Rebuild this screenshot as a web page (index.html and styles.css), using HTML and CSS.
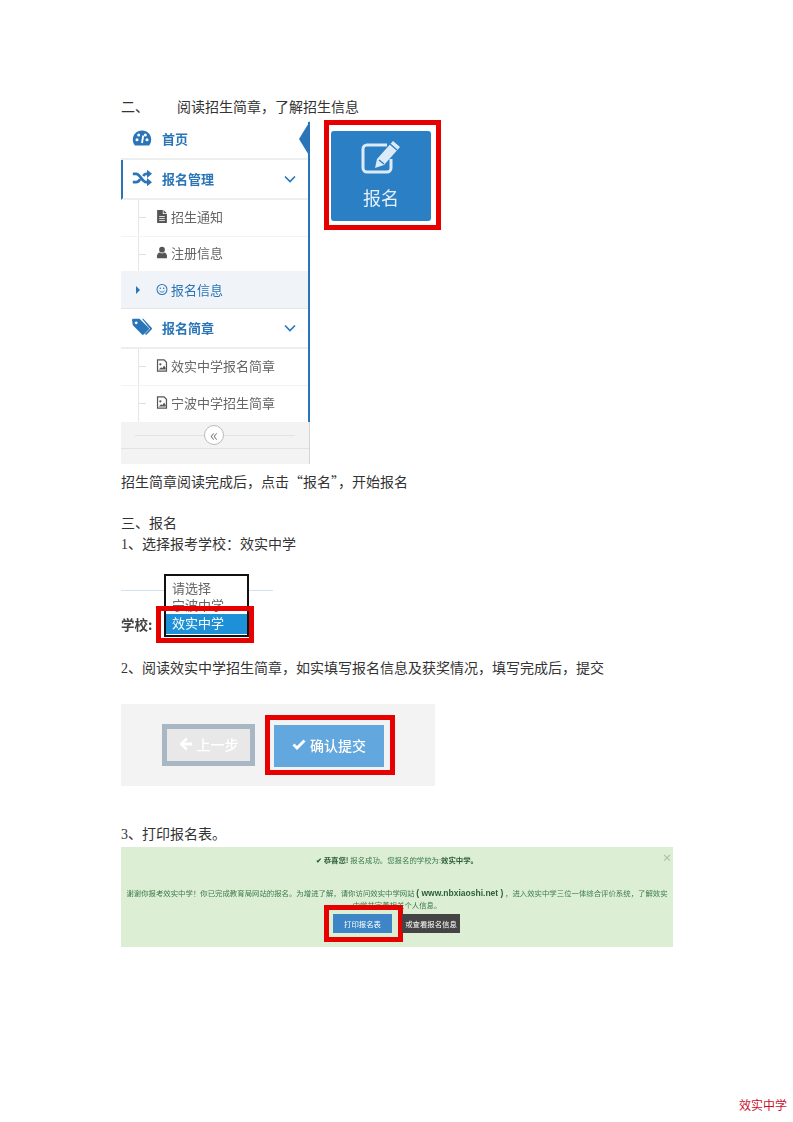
FILE: index.html
```html
<!DOCTYPE html>
<html lang="zh-CN">
<head>
    <meta charset="UTF-8">
    <title>报名流程</title>
    <link rel="stylesheet" href="styles.css">
</head>
<body>
    <div class="page">
        <p class="line line-first"><span class="step-no">二、</span>阅读招生简章，了解招生信息</p>

        <div class="signup-row">
            <div class="sidebar">
                <div class="nav-top nav-home">
                    <svg class="nav-icon" viewBox="0 0 24 24"><path fill="#2a75b8" d="M12 3C5.600 3 1 8 1 14c0 2.700 1 5 2.500 7h17C22 19 23 16.700 23 14 23 8 18.400 3 12 3z"/><circle cx="6" cy="14" r="1.800" fill="#fff"/><circle cx="8" cy="8.500" r="1.800" fill="#fff"/><circle cx="16" cy="8.500" r="1.800" fill="#fff"/><circle cx="18" cy="14" r="1.800" fill="#fff"/><path stroke="#fff" stroke-width="2.200" d="M12 18l1.500-9"/></svg>
                    <span>首页</span>
                    <span class="nav-arrow"></span>
                </div>
                <div class="nav-top nav-open">
                    <svg class="nav-icon" viewBox="0 0 24 24"><path fill="none" stroke="#2a75b8" stroke-width="3.400" d="M1 7h4c5 0 7 10 12 10h2M1 17h4c2 0 3.500-1.500 4.800-3.500M13.500 9.500C14.500 8 15.500 7 17 7h2"/><path fill="#2a75b8" d="M18 2l6 5-6 5zM18 12l6 5-6 5z"/></svg>
                    <span>报名管理</span>
                    <svg class="nav-chevron" viewBox="0 0 12 8"><path d="M1 1.500l5 5 5-5" fill="none" stroke="#2a75b8" stroke-width="1.600"/></svg>
                </div>
                <div class="sub-list">
                    <div class="sub-item sub-notice">
                        <svg class="sub-icon" viewBox="0 0 14 16"><path fill="#555" d="M1 0h7v5h5v11H1zM9 0l4 4H9z"/><path stroke="#fff" d="M3.500 8h7M3.500 10.500h7M3.500 13h7"/></svg>
                        <span>招生通知</span>
                    </div>
                    <div class="sub-item sub-reg">
                        <svg class="sub-icon" viewBox="0 0 14 16"><circle cx="7" cy="4.500" r="3.500" fill="#555"/><path fill="#555" d="M1 15c-1-5 2-7 3-7 1.800 1.400 4.200 1.400 6 0 1 0 4 2 3 7z"/></svg>
                        <span>注册信息</span>
                    </div>
                    <div class="sub-item sub-current">
                        <span class="sub-caret"></span>
                        <svg class="sub-icon" viewBox="0 0 14 14"><circle cx="7" cy="7" r="5.800" fill="none" stroke="#2a75b8" stroke-width="1.200"/><circle cx="5" cy="5.500" r="0.900" fill="#2a75b8"/><circle cx="9" cy="5.500" r="0.900" fill="#2a75b8"/><path d="M4 8.500c1.500 2 4.500 2 6 0" fill="none" stroke="#2a75b8"/></svg>
                        <span>报名信息</span>
                    </div>
                </div>
                <div class="nav-top nav-brochure">
                    <svg class="nav-icon nav-icon-tags" viewBox="0 0 24 20"><path fill="#2a75b8" d="M0 1.500C0 .700.700 0 1.500 0H9l11 11c.6.600.6 1.500 0 2l-6 6c-.6.600-1.500.6-2 0L1 8z"/><circle cx="5" cy="5" r="1.700" fill="#fff"/><path fill="#2a75b8" d="M12 0h1.500l10 11c.6.600.6 1.500 0 2l-6.500 6.500-1.500-1 6-6.500z"/></svg>
                    <span>报名简章</span>
                    <svg class="nav-chevron" viewBox="0 0 12 8"><path d="M1 1.500l5 5 5-5" fill="none" stroke="#2a75b8" stroke-width="1.600"/></svg>
                </div>
                <div class="sub-list">
                    <div class="sub-item sub-doc">
                        <svg class="sub-icon" viewBox="0 0 14 16"><path fill="none" stroke="#555" stroke-width="1.500" d="M1.500 1h8l3 3v11h-11z"/><circle cx="5" cy="6.500" r="1.400" fill="#555"/><path fill="#555" d="M3 13l3-3 1.500 1.500L9.500 8l2 3v2z"/></svg>
                        <span>效实中学报名简章</span>
                    </div>
                    <div class="sub-item sub-doc2">
                        <svg class="sub-icon" viewBox="0 0 14 16"><path fill="none" stroke="#555" stroke-width="1.500" d="M1.500 1h8l3 3v11h-11z"/><circle cx="5" cy="6.500" r="1.400" fill="#555"/><path fill="#555" d="M3 13l3-3 1.500 1.500L9.500 8l2 3v2z"/></svg>
                        <span>宁波中学招生简章</span>
                    </div>
                </div>
                <div class="collapse-bar">
                    <span class="collapse-btn">«</span>
                </div>
            </div>

            <div class="red-frame tile-frame">
                <div class="signup-tile">
                    <svg class="tile-icon" viewBox="0 0 42 36"><path d="M31 19v9a4 4 0 0 1-4 4H7a4 4 0 0 1-4-4V9a4 4 0 0 1 4-4h20" fill="none" stroke="#dcebf7" stroke-width="3"/><path fill="#dcebf7" d="M33 1l7 6-16 18-9 3 2-9z"/><path stroke="#2a7fc5" stroke-width="1.400" d="M30 4l7 6M19 20l5 4"/></svg>
                    <span>报名</span>
                </div>
            </div>
        </div>

        <p class="line line-after-nav">招生简章阅读完成后，点击<span class="quote">“</span>报名<span class="quote">”</span>，开始报名</p>
        <p class="line line-section">三、报名</p>
        <p class="line">1、选择报考学校：效实中学</p>

        <div class="school-shot">
            <div class="school-rule"></div>
            <span class="school-label">学校:</span>
            <div class="school-list">
                <div class="school-opt">请选择</div>
                <div class="school-opt">宁波中学</div>
                <div class="school-opt school-opt-on">效实中学</div>
            </div>
            <div class="red-frame school-mark"></div>
        </div>

        <p class="line line-step2">2、阅读效实中学招生简章，如实填写报名信息及获奖情况，填写完成后，提交</p>

        <div class="submit-shot">
            <div class="btn-back">
                <svg class="btn-icon" viewBox="0 0 14 14"><path fill="#fff" d="M7 .500l1.800 1.800L5.500 5.500H13v3H5.500l3.300 3.200L7 13.500.500 7z"/></svg>
                <span>上一步</span>
            </div>
            <div class="red-frame submit-frame">
                <div class="btn-submit">
                    <svg class="btn-icon" viewBox="0 0 14 14"><path fill="#fff" d="M5 12L.500 7.500l2-2L5 8l6.500-6.500 2 2z"/></svg>
                    <span>确认提交</span>
                </div>
            </div>
        </div>

        <p class="line line-step3">3、打印报名表。</p>

        <div class="result-shot">
            <span class="result-close">×</span>
            <p class="result-title"><b>✔ 恭喜您!</b> 报名成功。您报名的学校为:<b>效实中学。</b></p>
            <p class="result-text">谢谢你报考效实中学！你已完成教育局网站的报名。为增进了解，请你访问效实中学网站 <b class="result-url">( www.nbxiaoshi.net )</b> ，进入效实中学三位一体综合评价系统，了解效实中学并完善相关个人信息。</p>
            <div class="result-btns">
                <div class="red-frame print-frame"><span class="btn-print">打印报名表</span></div>
                <span class="btn-view">或查看报名信息</span>
            </div>
        </div>

        <div class="page-foot">效实中学</div>
    </div>
</body>
</html>
```

FILE: styles.css
```css
html, body {
    margin: 0;
    padding: 0;
    background-color: #ffffff;
}

.page {
    width: 793px;
    height: 1122px;
    box-sizing: border-box;
    padding: 97px 6px 0 121px;
    display: flex;
    flex-direction: column;
    overflow: hidden;
    font-family: "Liberation Serif", "Noto Sans CJK SC", serif;
    font-size: 14px;
    color: #333;
}

.line {
    margin: 0;
    line-height: 21px;
    height: 21px;
    white-space: nowrap;
}

.step-no {
    display: inline-block;
    width: 56px;
}

.quote {
    font-family: "Noto Sans CJK SC", sans-serif;
}

.line-after-nav {
    margin-top: 7px;
}

.line-section {
    margin-top: 21px;
}

.line-step2 {
    margin-top: 15px;
}

.line-step3 {
    margin-top: 38px;
}

.red-frame {
    border: 5px solid #e60000;
    box-sizing: border-box;
}

/* the pasted screenshots are a little soft */
.sidebar,
.tile-frame,
.school-shot,
.submit-shot,
.result-shot {
    filter: blur(0.35px);
}

/* sidebar */
.signup-row {
    display: flex;
    align-items: flex-start;
    margin-top: 4px;
}

.sidebar {
    width: 189px;
    height: 342px;
    display: flex;
    flex-direction: column;
    font-family: "Noto Sans CJK SC", sans-serif;
    border-right: 2px solid #2a75b8;
    box-sizing: border-box;
    position: relative;
}

.nav-top {
    display: flex;
    align-items: center;
    box-sizing: border-box;
    padding-left: 11px;
    padding-bottom: 2px;
    font-size: 13px;
    font-weight: 700;
    color: #2a75b8;
    border-bottom: 2px solid #eeeeee;
    position: relative;
}

.nav-home {
    height: 38px;
    padding-bottom: 4px;
}

.nav-open {
    height: 40px;
    border-left: 2px solid #2a75b8;
    padding-left: 9px;
}

.nav-brochure {
    height: 40px;
}

.nav-icon {
    width: 20px;
    height: 20px;
    margin-right: 10px;
    flex: none;
}

.nav-icon-tags {
    width: 20px;
    height: 18px;
}

.nav-chevron {
    width: 12px;
    height: 8px;
    position: absolute;
    right: 12px;
    top: 15px;
}

.nav-arrow {
    position: absolute;
    right: -2px;
    top: -1px;
    border-style: solid;
    border-width: 18px 11px 18px 0;
    border-color: transparent #2a75b8 transparent transparent;
}

.sub-list {
    background-image: linear-gradient(#e6e6e6, #e6e6e6);
    background-size: 1px 100%;
    background-position: 17px 0;
    background-repeat: no-repeat;
}

.sub-item {
    display: flex;
    align-items: center;
    height: 37px;
    box-sizing: border-box;
    padding-left: 35px;
    padding-bottom: 4px;
    font-size: 13px;
    color: #666;
    border-bottom: 1px solid #f3f3f3;
    position: relative;
}

.sub-item::before {
    content: "";
    position: absolute;
    left: 18px;
    top: 17px;
    width: 7px;
    height: 1px;
    background-color: #e0e0e0;
}

.sub-reg {
    height: 35px;
}

.sub-doc2 {
    height: 36px;
    border-bottom: none;
}

.sub-icon {
    width: 12px;
    height: 13px;
    margin-right: 3px;
    flex: none;
}

.sub-current {
    padding-bottom: 2px;
    color: #2a75b8;
    background-color: #f0f3f8;
    border-bottom: 1px solid #e6e6e6;
}

.sub-current::before {
    display: none;
}

.sub-caret {
    position: absolute;
    left: 15px;
    top: 14px;
    border-style: solid;
    border-width: 4px 0 4px 4px;
    border-color: transparent transparent transparent #2a75b8;
}

.collapse-bar {
    height: 42px;
    margin-right: -2px;
    background-color: #f3f3f3;
    border-right: 1px solid #d5d5d5;
    box-sizing: border-box;
    position: relative;
    background-image: linear-gradient(#e2e2e2, #e2e2e2), linear-gradient(#e2e2e2, #e2e2e2);
    background-size: 160px 1px, 100% 1px;
    background-position: 14px 13px, 0 26px;
    background-repeat: no-repeat;
}

.collapse-btn {
    position: absolute;
    left: 83px;
    top: 3px;
    width: 18px;
    height: 18px;
    border: 1px solid #bbb;
    border-radius: 50%;
    background-color: #fff;
    color: #888;
    font-size: 17px;
    line-height: 15px;
    text-align: center;
}

/* 报名 tile */
.tile-frame {
    width: 117px;
    height: 110px;
    margin: -2px 0 0 14px;
    padding: 6px 5px 4px 2px;
}

.signup-tile {
    width: 100px;
    height: 90px;
    background-color: #2a7fc5;
    border-radius: 3px;
    display: flex;
    flex-direction: column;
    align-items: center;
    font-family: "Noto Sans CJK SC", sans-serif;
    font-size: 18px;
    line-height: 24px;
    color: #e4f0f9;
}

.tile-icon {
    width: 44px;
    height: 36px;
    margin: 9px 0 9px 0;
}

/* school select */
.school-shot {
    height: 69px;
    margin-top: 19px;
    position: relative;
    font-family: "Noto Sans CJK SC", sans-serif;
}

.school-rule {
    position: absolute;
    left: 0;
    top: 16px;
    width: 152px;
    height: 1px;
    background-color: #cfe2f2;
}

.school-label {
    position: absolute;
    left: 0;
    top: 40px;
    font-size: 13.500px;
    line-height: 20px;
    font-weight: 700;
    color: #444;
}

.school-list {
    position: absolute;
    left: 43px;
    top: 0;
    width: 85px;
    height: 63px;
    box-sizing: border-box;
    border: 2px solid #111;
    background-color: #fff;
    padding-top: 3px;
    font-size: 13px;
    line-height: 17px;
    color: #666;
}

.school-opt {
    height: 17px;
    padding-left: 6px;
}

.school-opt-on {
    height: 20px;
    line-height: 18px;
    margin-top: 1px;
    background-color: #1e90d8;
    color: #fff;
}

.school-mark {
    position: absolute;
    left: 35px;
    top: 32px;
    width: 98px;
    height: 37px;
}

/* submit buttons */
.submit-shot {
    width: 314px;
    height: 82px;
    margin-top: 25px;
    background-color: #f3f3f3;
    box-sizing: border-box;
    padding-left: 41px;
    display: flex;
    align-items: center;
    font-family: "Noto Sans CJK SC", sans-serif;
    font-size: 14px;
    font-weight: 500;
    color: #fff;
}

.btn-back {
    width: 93px;
    height: 42px;
    box-sizing: border-box;
    border: 5px solid #a9b7c4;
    padding-bottom: 2px;
    background-color: #e8e8e8;
    display: flex;
    align-items: center;
    justify-content: center;
}

.submit-frame {
    width: 130px;
    height: 60px;
    margin-left: 10px;
    padding: 5px 4px;
    background-color: #f3f3f3;
}

.btn-submit {
    width: 110px;
    height: 42px;
    padding-bottom: 2px;
    box-sizing: border-box;
    background-color: #62a8de;
    display: flex;
    align-items: center;
    justify-content: center;
}

.btn-icon {
    width: 14px;
    height: 14px;
    margin-right: 4px;
}

/* result message */
.result-shot {
    width: 552px;
    height: 100px;
    margin-top: 2px;
    background-color: #dcefd5;
    position: relative;
    box-sizing: border-box;
    padding: 7px 2px 0;
    font-family: "Noto Sans CJK SC", sans-serif;
    font-size: 7.400px;
    line-height: 11px;
    color: #3b7a4b;
    text-align: center;
}

.result-shot p {
    margin: 0;
}

.result-close {
    position: absolute;
    right: 1px;
    top: 3px;
    color: #aebfa8;
    font-size: 10px;
    line-height: 16px;
    font-weight: 700;
}

.result-title b {
    color: #2c5e38;
}

.result-shot .result-text {
    margin-top: 22px;
}

.result-url {
    font-family: "Liberation Sans", sans-serif;
    font-size: 8.500px;
    color: #2c5e38;
}

.result-btns {
    position: absolute;
    left: 203px;
    top: 58px;
    display: flex;
    align-items: flex-start;
}

.print-frame {
    width: 79px;
    height: 37px;
    padding: 4px 0 0 4px;
    background-color: #dcefd5;
}

.btn-print,
.btn-view {
    display: block;
    height: 19px;
    line-height: 19px;
    color: #fff;
    text-align: center;
}

.btn-print {
    width: 59px;
    background-color: #3d85c6;
}

.btn-view {
    width: 58px;
    margin: 9px 0 0 -1px;
    background-color: #444444;
}

.page-foot {
    margin-top: auto;
    margin-bottom: 9px;
    text-align: right;
    font-family: "Noto Sans CJK SC", sans-serif;
    font-size: 12px;
    line-height: 17px;
    color: #c8102e;
}
```
